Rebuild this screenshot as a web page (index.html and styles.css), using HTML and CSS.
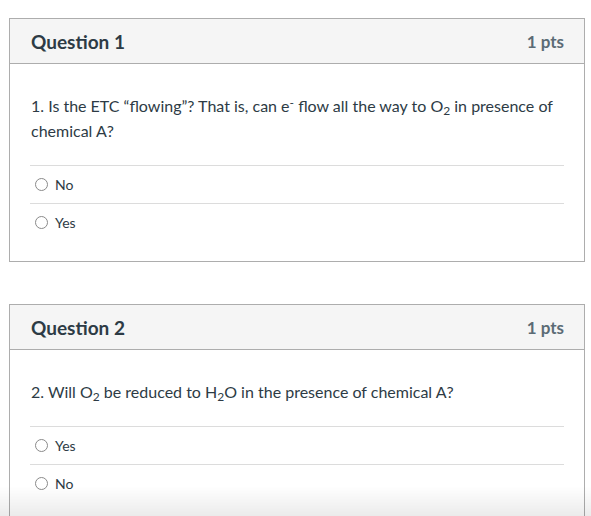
FILE: index.html
```html
<!DOCTYPE html>
<html>
<head>
<meta charset="utf-8">
<link rel="stylesheet" href="styles.css">
</head>
<body>
<div class="quiz">
  <div class="question">
    <div class="q-header">
      <h2 class="q-title">Question 1</h2>
      <span class="q-pts">1 pts</span>
    </div>
    <div class="q-body">
      <p class="q-text">1. Is the ETC “flowing”? That is, can e<sup>-</sup> flow all the way to O<sub>2</sub> in presence of chemical A?</p>
      <div class="answers">
        <label class="answer"><span class="radio"></span><span>No</span></label>
        <label class="answer"><span class="radio"></span><span>Yes</span></label>
      </div>
    </div>
  </div>
  <div class="question">
    <div class="q-header">
      <h2 class="q-title">Question 2</h2>
      <span class="q-pts">1 pts</span>
    </div>
    <div class="q-body">
      <p class="q-text">2. Will O<sub>2</sub> be reduced to H<sub>2</sub>O in the presence of chemical A?</p>
      <div class="answers">
        <label class="answer"><span class="radio"></span><span>Yes</span></label>
        <label class="answer"><span class="radio"></span><span>No</span></label>
      </div>
    </div>
  </div>
</div>
<div class="bottom-fade"></div>
</body>
</html>
```
FILE: styles.css
```css
html, body {
  margin: 0;
  padding: 0;
  background: #fff;
}
body {
  font-family: Lato, "Open Sans", sans-serif;
  color: #2d3b45;
}
.quiz {
  padding: 18px 6px 0 9px;
  display: flex;
  flex-direction: column;
  gap: 42px;
}
.question {
  border: 1px solid #adadad;
  background: #fff;
}
.q-header {
  display: flex;
  justify-content: space-between;
  align-items: center;
  height: 44px;
  padding: 0 20px 0 21px;
  background: #f5f5f5;
  border-bottom: 1px solid #adadad;
}
.q-title {
  margin: 0;
  font-size: 19px;
  font-weight: 700;
  color: #2d3b45;
}
.q-pts {
  font-size: 17px;
  font-weight: 700;
  color: #5b6b75;
}
.q-body {
  padding: 29px 20px 20px 20px;
}
.q-text {
  margin: 0 0 22px 1px;
  font-size: 16px;
  line-height: 25px;
}
.q-text sub, .q-text sup {
  font-size: 12px;
  line-height: 0;
}
.q-text sub {
  vertical-align: -3px;
}
.q-text sup {
  vertical-align: 5px;
}
.answers {
  display: flex;
  flex-direction: column;
}
.answer {
  display: flex;
  align-items: center;
  gap: 7px;
  height: 38px;
  border-top: 1px solid #dcdcdc;
  padding-left: 5px;
  font-size: 14px;
  color: #2d3b45;
  box-sizing: border-box;
}
.radio {
  width: 11px;
  height: 11px;
  border: 1px solid #8a8a8a;
  border-radius: 50%;
  background: #fff;
  flex: none;
}
.bottom-fade {
  position: fixed;
  left: 0;
  right: 0;
  bottom: 0;
  height: 30px;
  background: linear-gradient(to bottom, rgba(0,0,0,0), rgba(0,0,0,0.08));
  pointer-events: none;
}
```
